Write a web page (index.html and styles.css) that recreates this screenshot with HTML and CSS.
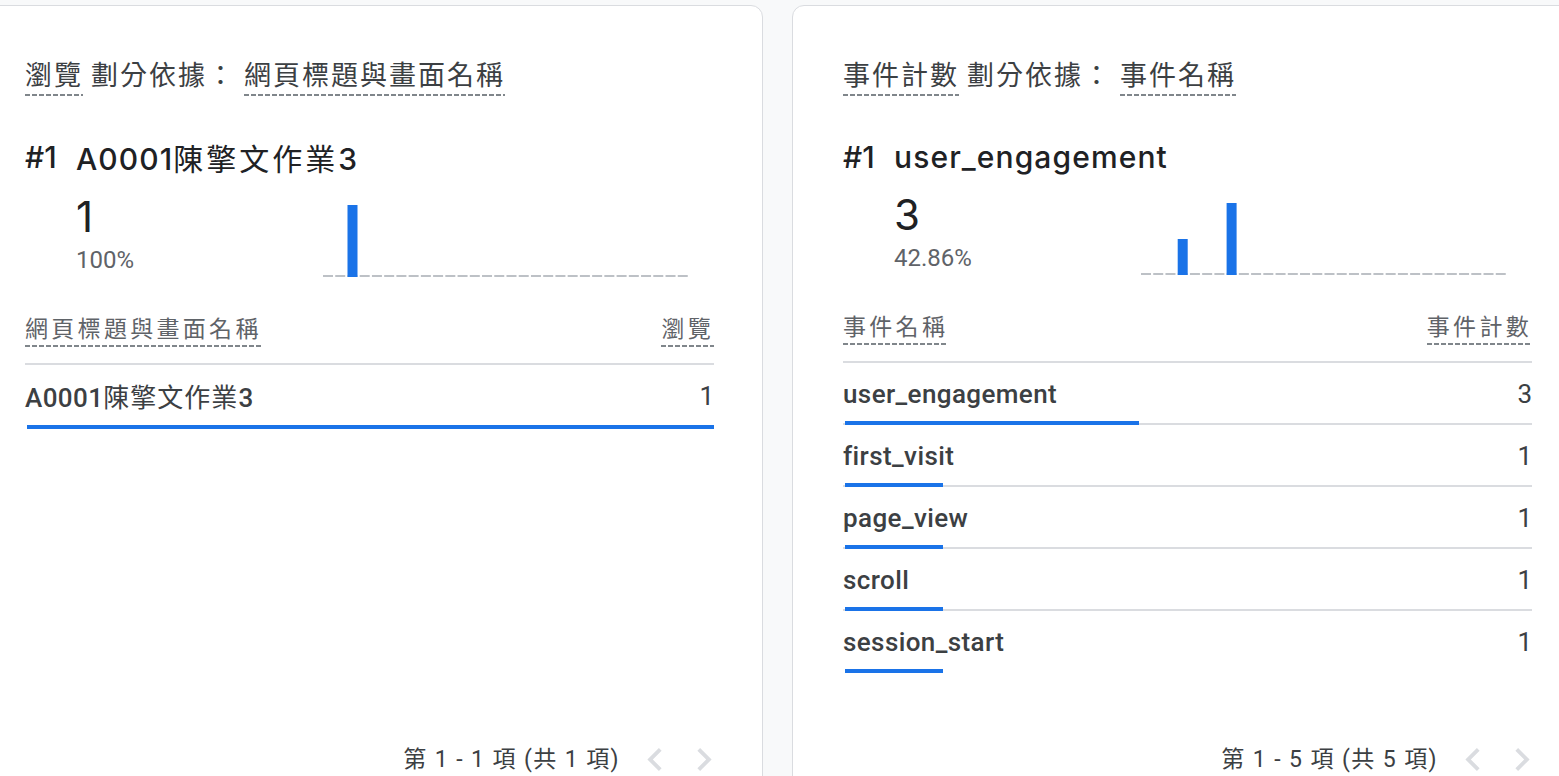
FILE: index.html
```html
<!DOCTYPE html>
<html lang="zh-Hant">
<head>
<meta charset="utf-8">
<title>報表卡片</title>
<link rel="stylesheet" href="styles.css">
</head>
<body>
<div class="board">
  <section class="card">
    <div class="title"><span class="dotted">瀏覽</span> 劃分依據： <span class="dotted">網頁標題與畫面名稱</span></div>
    <div class="top-item"><span class="rank">#1</span><span class="top-name">A0001<span class="cjk">陳擎文作業</span>3</span></div>
    <div class="stat">
      <div class="nums">
        <div class="big">1</div>
        <div class="pct">100%</div>
      </div>
      <svg class="chart" width="367" height="72" viewBox="0 0 367 72">
        <line class="base" x1="0" y1="71" x2="367" y2="71"/>
        <rect class="bar" x="24.5" y="0" width="10" height="72"/>
      </svg>
    </div>
    <div class="thead">
      <span class="th dotted">網頁標題與畫面名稱</span>
      <span class="th dotted">瀏覽</span>
    </div>
    <div class="rows">
      <div class="row">
        <div class="cells"><span class="label">A0001<span class="cjk">陳擎文作業</span>3</span><span class="val">1</span></div>
        <div class="track"><div class="fill" style="width:100%"></div></div>
      </div>
    </div>
    <div class="pager">
      <span class="pager-text">第 1 - 1 項 (共 1 項)</span>
      <div class="navs">
        <svg class="chev" width="15" height="23" viewBox="8 6 7.41 12"><path d="M15.41 7.41L14 6l-6 6 6 6 1.41-1.41L10.83 12z"/></svg>
        <svg class="chev" width="15" height="23" viewBox="8.59 6 7.41 12"><path d="M10 6L8.59 7.41 13.17 12l-4.58 4.59L10 18l6-6z"/></svg>
      </div>
    </div>
  </section>

  <section class="card">
    <div class="title"><span class="dotted">事件計數</span> 劃分依據： <span class="dotted">事件名稱</span></div>
    <div class="top-item"><span class="rank">#1</span><span class="top-name">user_engagement</span></div>
    <div class="stat">
      <div class="nums">
        <div class="big">3</div>
        <div class="pct">42.86%</div>
      </div>
      <svg class="chart" width="367" height="72" viewBox="0 0 367 72">
        <line class="base" x1="0" y1="71" x2="367" y2="71"/>
        <rect class="bar" x="36.7" y="36" width="10" height="36"/>
        <rect class="bar" x="85.6" y="0" width="10" height="72"/>
      </svg>
    </div>
    <div class="thead">
      <span class="th dotted">事件名稱</span>
      <span class="th dotted">事件計數</span>
    </div>
    <div class="rows">
      <div class="row">
        <div class="cells"><span class="label">user_engagement</span><span class="val">3</span></div>
        <div class="track"><div class="fill" style="width:42.86%"></div></div>
      </div>
      <div class="row">
        <div class="cells"><span class="label">first_visit</span><span class="val">1</span></div>
        <div class="track"><div class="fill" style="width:14.29%"></div></div>
      </div>
      <div class="row">
        <div class="cells"><span class="label">page_view</span><span class="val">1</span></div>
        <div class="track"><div class="fill" style="width:14.29%"></div></div>
      </div>
      <div class="row">
        <div class="cells"><span class="label">scroll</span><span class="val">1</span></div>
        <div class="track"><div class="fill" style="width:14.29%"></div></div>
      </div>
      <div class="row">
        <div class="cells"><span class="label">session_start</span><span class="val">1</span></div>
        <div class="track"><div class="fill" style="width:14.29%"></div></div>
      </div>
    </div>
    <div class="pager">
      <span class="pager-text">第 1 - 5 項 (共 5 項)</span>
      <div class="navs">
        <svg class="chev" width="15" height="23" viewBox="8 6 7.41 12"><path d="M15.41 7.41L14 6l-6 6 6 6 1.41-1.41L10.83 12z"/></svg>
        <svg class="chev" width="15" height="23" viewBox="8.59 6 7.41 12"><path d="M10 6L8.59 7.41 13.17 12l-4.58 4.59L10 18l6-6z"/></svg>
      </div>
    </div>
  </section>
</div>
</body>
</html>
```

FILE: styles.css
```css
* { box-sizing: border-box; }

html, body {
  margin: 0;
  height: 776px;
  overflow: hidden;
}

body {
  background: #f8f9fa;
  font-family: Roboto, "Noto Sans CJK TC", sans-serif;
  color: #3c4043;
}

.board {
  display: flex;
  gap: 29px;
  margin-left: -26px;
  padding-top: 5px;
  align-items: stretch;
}

.card {
  flex: 0 0 789px;
  background: #fff;
  border: 1px solid #dadce0;
  border-radius: 12px;
  padding: 48px 48px 40px 50px;
  display: flex;
  flex-direction: column;
}

.title {
  font-family: "Noto Sans CJK TC", sans-serif;
  font-size: 27px;
  letter-spacing: 2px;
  line-height: 40px;
  color: #3c4043;
  white-space: nowrap;
}

.dotted {
  display: inline-block;
  line-height: 1.1;
  padding-bottom: 7px;
  background-image: repeating-linear-gradient(to right, #80868b 0 5px, transparent 5px 7px);
  background-size: 100% 2px;
  background-position: left bottom;
  background-repeat: no-repeat;
}

.top-item {
  margin-top: 43px;
  display: flex;
  font-family: Inter, "Noto Sans CJK TC", sans-serif;
  font-size: 30px;
  font-weight: 500;
  line-height: 36px;
  color: #202124;
  white-space: nowrap;
}

.rank {
  width: 51px;
  flex: none;
}

.top-name {
  letter-spacing: 1.1px;
}

.top-name .cjk {
  letter-spacing: 3px;
}

.cjk {
  font-family: "Noto Sans CJK TC", sans-serif;
  font-weight: 400;
  letter-spacing: 1px;
}

.stat {
  margin-top: 16px;
  display: flex;
  align-items: flex-start;
  padding-left: 51px;
}

.nums {
  width: 247px;
  flex: none;
}

.big {
  font-family: Inter, sans-serif;
  font-size: 42px;
  font-weight: 400;
  line-height: 48px;
  color: #202124;
}

.pct {
  margin-top: 4px;
  font-family: Roboto, sans-serif;
  font-size: 24px;
  line-height: 30px;
  color: #5f6368;
}

.chart {
  display: block;
  margin-top: 12px;
  flex: none;
}

.chart .base {
  stroke: #bdc1c6;
  stroke-width: 2;
  stroke-dasharray: 10 2.233;
}

.chart .bar {
  fill: #1a73e8;
}

.thead {
  margin-top: 38px;
  display: flex;
  justify-content: space-between;
  align-items: flex-end;
  padding-bottom: 16px;
  border-bottom: 2px solid #dadce0;
}

.th {
  font-family: "Noto Sans CJK TC", sans-serif;
  font-size: 23px;
  letter-spacing: 3.3px;
  color: #5f6368;
  white-space: nowrap;
}

.row {
  padding-top: 16px;
}

.cells {
  display: flex;
  justify-content: space-between;
  font-size: 26px;
  line-height: 30px;
  white-space: nowrap;
}

.label {
  font-weight: 500;
  letter-spacing: 0.4px;
  color: #3c4043;
}

.val {
  font-weight: 400;
  color: #3c4043;
}

.track {
  margin-top: 12px;
  height: 4px;
  padding-left: 2px;
  display: flex;
  align-items: flex-end;
  background: linear-gradient(to top, #dadce0 2px, transparent 2px);
}

.row:last-child .track {
  background: none;
}

.fill {
  height: 4px;
  background: #1a73e8;
}

.pager {
  margin-top: auto;
  padding-top: 64px;
  display: flex;
  justify-content: flex-end;
  align-items: center;
  height: 110px;
}

.pager-text {
  font-size: 23px;
  letter-spacing: 1.4px;
  line-height: 46px;
  color: #3c4043;
  white-space: nowrap;
}

.navs {
  display: flex;
  align-items: center;
  gap: 35px;
  margin-left: 27px;
  padding-right: 2px;
}

.chev {
  display: block;
  fill: #dadce0;
}
```
